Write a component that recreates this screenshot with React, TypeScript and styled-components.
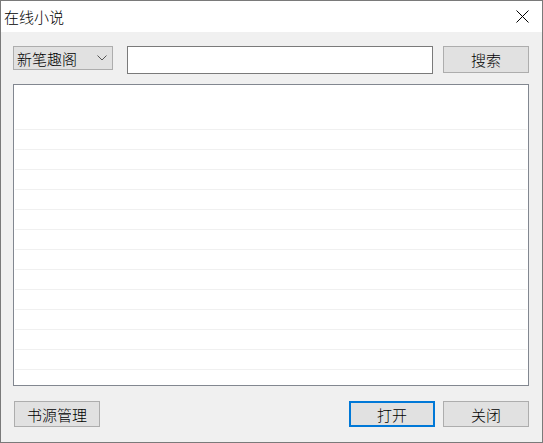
import React from 'react';
import styled, { createGlobalStyle } from 'styled-components';

const Global = createGlobalStyle`
  html, body { margin: 0; padding: 0; background: #fff; }
  body { font-family: "Noto Sans CJK SC", "Noto Sans", sans-serif; font-weight: 300; }
`;

const Window = styled.div`
  width: 543px;
  height: 443px;
  box-sizing: border-box;
  border: 1px solid #7a7a7a;
  display: flex;
  flex-direction: column;
  background: #f0f0f0;
  overflow: hidden;
`;

const TitleBar = styled.div`
  height: 31px;
  flex-shrink: 0;
  background: #fff;
  display: flex;
  align-items: center;
  justify-content: space-between;
  padding-left: 3px;
`;

const Title = styled.span`
  font-size: 15px;
  line-height: 15px;
  color: #000;
`;

const CloseBtn = styled.div`
  width: 40px;
  height: 31px;
  display: flex;
  align-items: center;
  justify-content: center;
`;

const Content = styled.div`
  padding: 14px 12px 0 12px;
  display: flex;
  flex-direction: column;
`;

const TopRow = styled.div`
  display: flex;
  align-items: flex-start;
  height: 28px;
`;

const Combo = styled.div`
  width: 100px;
  height: 24px;
  box-sizing: border-box;
  border: 1px solid #adadad;
  background: #e1e1e1;
  display: flex;
  align-items: center;
  justify-content: space-between;
  padding: 0 5px 0 3px;
  font-size: 15px;
  color: #000;
`;

const SearchInput = styled.div`
  margin-left: 14px;
  width: 306px;
  height: 28px;
  box-sizing: border-box;
  border: 1px solid #7a7a7a;
  background: #fff;
`;

const Button = styled.div<{ $primary?: boolean; $ml?: number }>`
  width: 86px;
  height: 26px;
  margin-left: ${p => p.$ml ?? 0}px;
  box-sizing: border-box;
  border: ${p => (p.$primary ? '2px solid #0078d7' : '1px solid #adadad')};
  background: #e1e1e1;
  display: flex;
  align-items: center;
  justify-content: center;
  font-size: 15px;
  color: #000;
`;

const SearchButton = styled(Button)`
  height: 27px;
`;

const List = styled.div`
  margin-top: 10px;
  width: 516px;
  height: 302px;
  box-sizing: border-box;
  border: 1px solid #828790;
  background: #fff;
  overflow: hidden;
  padding: 0 1px;
`;

const HeaderSpace = styled.div`
  height: 44px;
`;

const Row = styled.div`
  height: 20px;
  box-sizing: border-box;
  border-top: 1px solid #f0f0f0;
`;

const BottomRow = styled.div`
  margin-top: 15px;
  width: 516px;
  display: flex;
  align-items: center;
`;

const Spacer = styled.div`
  flex: 1;
`;

export default function App() {
  const rows = Array.from({ length: 13 });
  return (
    <>
      <Global />
      <Window>
        <TitleBar>
          <Title>在线小说</Title>
          <CloseBtn>
            <svg width="13" height="13" viewBox="0 0 13 13">
              <path d="M0.5 0.5 L12.5 12.5 M12.5 0.5 L0.5 12.5" stroke="#000" strokeWidth="1" />
            </svg>
          </CloseBtn>
        </TitleBar>
        <Content>
          <TopRow>
            <Combo>
              <span>新笔趣阁</span>
              <svg width="10" height="6" viewBox="0 0 10 6">
                <polyline points="0.5,0.5 5,5 9.5,0.5" fill="none" stroke="#555" strokeWidth="1" />
              </svg>
            </Combo>
            <SearchInput />
            <SearchButton $ml={10}>搜索</SearchButton>
          </TopRow>
          <List>
            <HeaderSpace />
            {rows.map((_, i) => (
              <Row key={i} />
            ))}
          </List>
          <BottomRow>
            <Button $ml={1}>书源管理</Button>
            <Spacer />
            <Button $primary>打开</Button>
            <Button $ml={8}>关闭</Button>
          </BottomRow>
        </Content>
      </Window>
    </>
  );
}
